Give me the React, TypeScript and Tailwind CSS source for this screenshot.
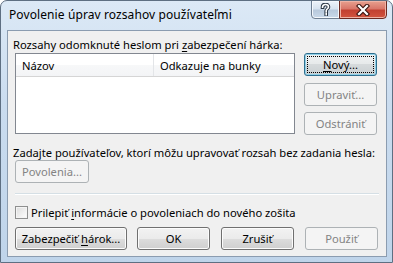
import type { ReactNode } from 'react'

const ui = "font-['Segoe_UI','Noto_Sans',sans-serif]"

function Btn({
  children,
  disabled,
  isDefault,
  className = '',
}: {
  children: ReactNode
  disabled?: boolean
  isDefault?: boolean
  className?: string
}) {
  const base = 'flex h-[23px] shrink-0 items-center justify-center rounded-[3px] border text-[11.2px] leading-none whitespace-nowrap'
  if (disabled) {
    return <div className={`${base} border-[#adb2b5] bg-[#f4f4f4] text-[#838383] ${className}`}>{children}</div>
  }
  if (isDefault) {
    return (
      <div
        className={`${base} border-[#2f6e8e] bg-[linear-gradient(to_bottom,#f0f2f3_0%,#e6e9ea_50%,#d6dadc_50%,#c9cfd2_100%)] text-black shadow-[inset_0_0_0_1px_#8fd0e8] outline outline-1 outline-dotted outline-offset-[-4px] outline-black ${className}`}
      >
        {children}
      </div>
    )
  }
  return (
    <div
      className={`${base} border-[#707070] bg-[linear-gradient(to_bottom,#f2f2f2_0%,#ebebeb_50%,#dddddd_50%,#cfcfcf_100%)] text-black shadow-[inset_0_0_0_1px_#fcfcfc] ${className}`}
    >
      {children}
    </div>
  )
}

export default function App() {
  return (
    <div
      className={`${ui} flex h-[263px] w-[393px] flex-col overflow-hidden rounded-t-[7px] border border-[#5e6f82] bg-[linear-gradient(to_bottom,#dce9f6_0%,#cadcef_40%,#bfd4ea_100%)] text-black`}
    >
      {/* title bar */}
      <div className="flex h-[29px] shrink-0 items-start">
        <div className="mt-[6px] pl-[8px] text-[12px] leading-[16px] tracking-[0.1px]">
          Povolenie úprav rozsahov používateľmi
        </div>
        <div className="-mt-[1px] ml-auto mr-[5px] flex h-[19px]">
          <div className="flex w-[29px] items-center justify-center rounded-bl-[4px] border border-[#6f7f92] bg-[linear-gradient(to_bottom,#eef3f9_0%,#d8e3ef_45%,#b8c9dc_55%,#c9d9ea_100%)] shadow-[inset_0_0_0_1px_#f4f8fc]">
            <svg width="11" height="13" viewBox="0 0 11 13">
              <path
                d="M2.5 4.2 C2.5 2.2 3.8 1.5 5.5 1.5 C7.3 1.5 8.5 2.5 8.5 4 C8.5 5.6 6.2 6 6.2 7.8 L6.2 8.4 M6.2 10.3 L6.2 11.6"
                fill="none"
                stroke="#2a3644"
                strokeWidth="3.6"
                strokeLinecap="square"
              />
              <path
                d="M2.5 4.2 C2.5 2.2 3.8 1.5 5.5 1.5 C7.3 1.5 8.5 2.5 8.5 4 C8.5 5.6 6.2 6 6.2 7.8 L6.2 8.4 M6.2 10.3 L6.2 11.6"
                fill="none"
                stroke="#ffffff"
                strokeWidth="1.6"
                strokeLinecap="square"
              />
            </svg>
          </div>
          <div className="-ml-[1px] flex w-[48px] items-center justify-center rounded-br-[4px] border border-[#6b2a22] bg-[linear-gradient(to_bottom,#e8a18f_0%,#d9776a_45%,#c24131_55%,#d2553f_100%)] shadow-[inset_0_0_0_1px_#eeb3a6]">
            <svg width="14" height="12" viewBox="0 0 14 12">
              <path d="M3 2 L11 10 M11 2 L3 10" stroke="#3b1410" strokeWidth="4.4" strokeLinecap="square" />
              <path d="M3 2 L11 10 M11 2 L3 10" stroke="#ffffff" strokeWidth="2.2" strokeLinecap="square" />
            </svg>
          </div>
        </div>
      </div>

      {/* client area */}
      <div className="mb-[5px] ml-[6px] mr-[5px] flex flex-1 flex-col border border-[#8b9cb0] bg-[#f0f0f0] text-[11.2px] leading-[15px]">
        <div className="mt-[6px] whitespace-nowrap pl-[5px]">
          Rozsahy odomknuté heslom pri <span className="underline underline-offset-2">z</span>abezpečení hárka:
        </div>

        <div className="mt-[1px] flex pl-[7px]">
          <div className="flex h-[81px] w-[280px] flex-col border border-[#828790] bg-white">
            <div className="flex h-[23px] border-b border-[#d5d5d5] bg-[linear-gradient(to_bottom,#ffffff_0%,#ffffff_50%,#f7f8f9_50%,#f3f4f6_100%)]">
              <div className="flex w-[138px] items-center border-r border-[#e3e5e8] pl-[6px]">Názov</div>
              <div className="flex flex-1 items-center pl-[6px]">Odkazuje na bunky</div>
            </div>
          </div>
          <div className="ml-[9px] flex flex-col">
            <Btn isDefault className="w-[73px]">
              <span>
                <span className="underline underline-offset-2">N</span>ový...
              </span>
            </Btn>
            <Btn disabled className="mt-[7px] w-[73px]">
              Upraviť...
            </Btn>
            <Btn disabled className="mt-[6px] w-[73px]">
              Odstrániť
            </Btn>
          </div>
        </div>

        <div className="mt-[10px] whitespace-nowrap pl-[5px]">
          Zadajte používateľov, ktorí môžu upravovať rozsah bez zadania hesla:
        </div>
        <div className="pl-[7px]">
          <Btn disabled className="h-[22px] w-[74px]">
            Povolenia...
          </Btn>
        </div>

        <div className="mx-[7px] mt-[10px] h-[2px] border-t border-b border-t-[#d5dfe5] border-b-white" />

        <div className="mt-[10px] flex items-center pl-[7px]">
          <div className="h-[13px] w-[13px] border border-[#8e8f8f] bg-[linear-gradient(135deg,#dcdcdc_0%,#fefefe_100%)] shadow-[inset_0_0_0_1px_#f4f4f4]" />
          <div className="ml-[3px] whitespace-nowrap">
            Prilepiť <span className="underline underline-offset-2">i</span>nformácie o povoleniach do nového zošita
          </div>
        </div>

        <div className="mt-[7px] flex pl-[7px]">
          <Btn className="w-[112px]">
            <span>
              Zabezpečiť <span className="underline underline-offset-2">h</span>árok...
            </span>
          </Btn>
          <Btn className="ml-[10px] w-[73px]">OK</Btn>
          <Btn className="ml-[11px] w-[73px]">Zrušiť</Btn>
          <Btn disabled className="ml-[11px] w-[73px]">
            Použiť
          </Btn>
        </div>
      </div>
    </div>
  )
}
